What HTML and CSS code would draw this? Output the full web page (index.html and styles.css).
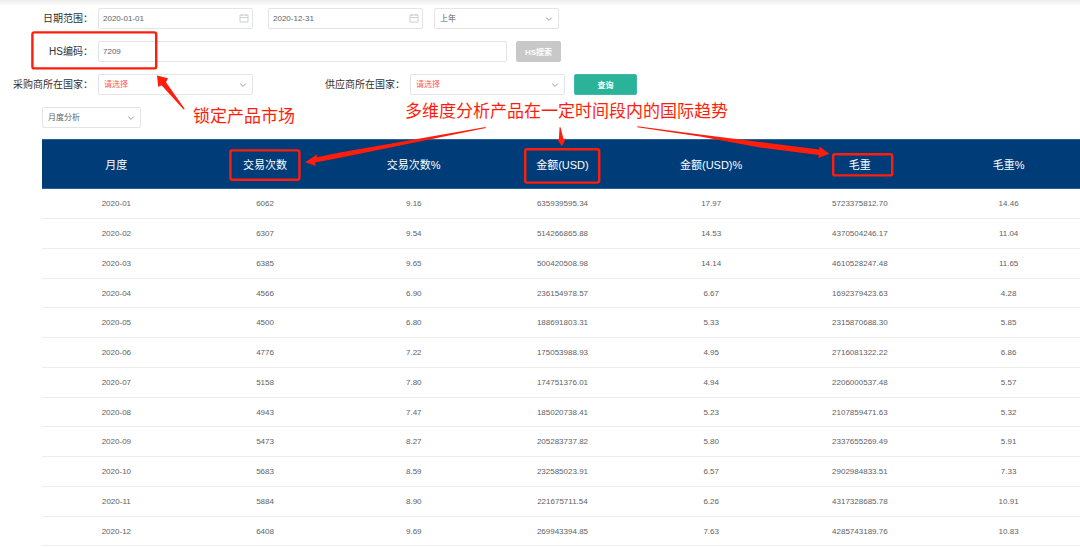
FILE: index.html
```html
<!DOCTYPE html>
<html lang="zh-CN">
<head>
<meta charset="utf-8">
<title>月度分析</title>
<link rel="stylesheet" href="styles.css">
</head>
<body>
<svg class="sprite" aria-hidden="true">
  <symbol id="calendar" viewBox="0 0 10 10"><path d="M1 2h8v7H1zM1 4.5h8M3 .8V3M7 .8V3" fill="none" stroke="currentColor" stroke-width=".8"/></symbol>
  <symbol id="chevron" viewBox="0 0 8 8"><path d="M1.2 2.6 4 5.4l2.8-2.8" fill="none" stroke="currentColor" stroke-width="1"/></symbol>
</svg>
<main class="page">
  <form class="filters">
    <div class="row">
      <label class="label" for="start">日期范围：</label>
      <div class="field field-wide"><input class="control" id="start" type="text" value="2020-01-01"><svg class="icon icon-date"><use href="#calendar"/></svg></div>
      <div class="field field-wide field-end"><input class="control" id="end" type="text" value="2020-12-31" aria-label="结束日期"><svg class="icon icon-date"><use href="#calendar"/></svg></div>
      <div class="field field-period"><select class="control" id="period" aria-label="时间段"><option>上年</option></select><svg class="icon icon-chevron"><use href="#chevron"/></svg></div>
    </div>
    <div class="row">
      <label class="label" for="hs">HS编码：</label>
      <div class="field field-code"><input class="control" id="hs" type="text" value="7209"></div>
      <button class="button button-muted" type="button">HS搜索</button>
    </div>
    <div class="row">
      <label class="label" for="buyer">采购商所在国家：</label>
      <div class="field field-wide"><select class="control control-empty" id="buyer"><option>请选择</option></select><svg class="icon icon-chevron"><use href="#chevron"/></svg></div>
      <label class="label label-supplier" for="supplier">供应商所在国家：</label>
      <div class="field field-wide"><select class="control control-empty" id="supplier"><option>请选择</option></select><svg class="icon icon-chevron"><use href="#chevron"/></svg></div>
      <button class="button button-primary" type="button">查询</button>
    </div>
    <div class="row row-mode">
      <div class="field field-mode"><select class="control control-mode" id="mode" aria-label="分析方式"><option>月度分析</option></select><svg class="icon icon-chevron"><use href="#chevron"/></svg></div>
    </div>
  </form>
  <div class="results">
    <table class="table">
      <thead>
        <tr><th>月度</th><th>交易次数</th><th>交易次数%</th><th>金额(USD)</th><th>金额(USD)%</th><th>毛重</th><th>毛重%</th></tr>
      </thead>
      <tbody>
        <tr><td>2020-01</td><td>6062</td><td>9.16</td><td>635939595.34</td><td>17.97</td><td>5723375812.70</td><td>14.46</td></tr>
        <tr><td>2020-02</td><td>6307</td><td>9.54</td><td>514266865.88</td><td>14.53</td><td>4370504246.17</td><td>11.04</td></tr>
        <tr><td>2020-03</td><td>6385</td><td>9.65</td><td>500420508.98</td><td>14.14</td><td>4610528247.48</td><td>11.65</td></tr>
        <tr><td>2020-04</td><td>4566</td><td>6.90</td><td>236154978.57</td><td>6.67</td><td>1692379423.63</td><td>4.28</td></tr>
        <tr><td>2020-05</td><td>4500</td><td>6.80</td><td>188691803.31</td><td>5.33</td><td>2315870688.30</td><td>5.85</td></tr>
        <tr><td>2020-06</td><td>4776</td><td>7.22</td><td>175053988.93</td><td>4.95</td><td>2716081322.22</td><td>6.86</td></tr>
        <tr><td>2020-07</td><td>5158</td><td>7.80</td><td>174751376.01</td><td>4.94</td><td>2206000537.48</td><td>5.57</td></tr>
        <tr><td>2020-08</td><td>4943</td><td>7.47</td><td>185020738.41</td><td>5.23</td><td>2107859471.63</td><td>5.32</td></tr>
        <tr><td>2020-09</td><td>5473</td><td>8.27</td><td>205283737.82</td><td>5.80</td><td>2337655269.49</td><td>5.91</td></tr>
        <tr><td>2020-10</td><td>5683</td><td>8.59</td><td>232585023.91</td><td>6.57</td><td>2902984833.51</td><td>7.33</td></tr>
        <tr><td>2020-11</td><td>5884</td><td>8.90</td><td>221675711.54</td><td>6.26</td><td>4317328685.78</td><td>10.91</td></tr>
        <tr><td>2020-12</td><td>6408</td><td>9.69</td><td>269943394.85</td><td>7.63</td><td>4285743189.76</td><td>10.83</td></tr>
      </tbody>
    </table>
  </div>
  <svg class="marks" width="1080" height="547" viewBox="0 0 1080 547" aria-hidden="true">
    <g fill="none" stroke="#ff1d0c" stroke-width="2.4">
      <rect x="32.4" y="32.4" width="123.8" height="36" rx="2"/>
      <rect x="230.4" y="150.4" width="69" height="29.4" rx="2"/>
      <rect x="525.2" y="149.2" width="74" height="33.4" rx="2"/>
      <rect x="833.2" y="154.2" width="59" height="21.2" rx="2"/>
    </g>
    <g fill="#ff1d0c">
      <path d="M157 75.5 168 78.3 166 82.3 184.8 109 183.6 109.6 161.5 85.2 158.2 87z"/>
      <path d="M305.2 162.3 317.5 154 316.6 157.2 340 152.5 485.6 127 485.8 128 340 157.8 315 162.5 316 166z"/>
      <path d="M559.6 127.3h.9L563.5 139l2.5-.4L562 146.2 557 139.2l1.9-.2z"/>
      <path d="M637.4 126.2 700 134.5 819.3 149.6 819.6 146.4 829.5 153.8 818.2 158 818.8 155 760 147.6 700 136.6 637.3 127.2z"/>
    </g>
  </svg>
  <p class="note note-market">锁定产品市场</p>
  <p class="note note-trend">多维度分析产品在一定时间段内的国际趋势</p>
</main>
</body>
</html>
```
FILE: styles.css
```css
* {
  box-sizing: border-box;
}

body {
  margin: 0;
  background: #fff;
  color: #606266;
  font-family: "Liberation Sans", "Noto Sans CJK SC", sans-serif;
  font-size: 8px;
}

.sprite {
  position: absolute;
  width: 0;
  height: 0;
}

.page {
  position: relative;
  overflow: hidden;
  background: linear-gradient(#ececec, #fff 6px);
}

.filters {
  display: flex;
  flex-direction: column;
  gap: 12px;
  padding: 8px 0 11px;
}

.row {
  display: flex;
  align-items: center;
  height: 21px;
}

.row-mode {
  padding-left: 42px;
}

.label {
  width: 98px;
  padding-right: 5px;
  color: #303133;
  font-size: 10px;
  line-height: 20px;
  text-align: right;
  white-space: nowrap;
}

.label-supplier {
  width: 157px;
}

.field {
  position: relative;
  height: 21px;
}

.field-wide {
  width: 155px;
}

.field-end {
  margin: 0 11px 0 15px;
}

.field-period {
  width: 125px;
}

.field-code {
  width: 409px;
}

.field-mode {
  width: 99px;
}

.control {
  display: block;
  width: 100%;
  height: 100%;
  margin: 0;
  padding: 0 5px;
  border: 1px solid #e2e4e8;
  border-radius: 2px;
  background: #fff;
  color: #606266;
  font: inherit;
  appearance: none;
}

input.control {
  padding: 0 4px;
}

.control-empty {
  color: #ff5a55;
}

.icon {
  position: absolute;
  pointer-events: none;
}

.icon-date {
  top: 5px;
  right: 4px;
  width: 10px;
  height: 10px;
  color: #c0c4cc;
}

.icon-chevron {
  top: 7px;
  right: 6px;
  width: 8px;
  height: 8px;
  color: #999ca3;
}

.button {
  height: 21px;
  margin-left: 9px;
  padding: 0;
  border: 1px solid transparent;
  border-radius: 2px;
  color: #fff;
  font: bold 8px "Liberation Sans", "Noto Sans CJK SC", sans-serif;
}

.button-muted {
  width: 45px;
  border-color: #c8c8c8;
  background: #c8c8c8;
}

.button-primary {
  width: 63px;
  border-color: #3fb9b0;
  background: #2ab399;
}

/* The last column runs slightly past the window edge. */
.results {
  margin: 0 -3px 0 42px;
}

.table {
  width: 100%;
  border-collapse: separate;
  border-spacing: 0;
  table-layout: fixed;
  text-align: center;
}

.table th {
  height: 50px;
  padding: 0;
  border: solid #2f6294;
  border-width: 1px 0;
  background: #003c78;
  color: #fff;
  font-size: 11px;
  font-weight: normal;
}

.table td {
  height: 30px;
  padding: 0;
  border-bottom: 1px solid #ebeef0;
}

.table tr:nth-child(4n) td {
  height: 29px;
}

.marks {
  position: absolute;
  top: 0;
  left: 0;
  pointer-events: none;
}

.note {
  position: absolute;
  margin: 0;
  color: #ff1d0c;
  font-size: 17px;
  line-height: 24px;
  white-space: nowrap;
}

.note-market {
  top: 105px;
  left: 193px;
}

.note-trend {
  top: 100px;
  left: 405px;
}
```
